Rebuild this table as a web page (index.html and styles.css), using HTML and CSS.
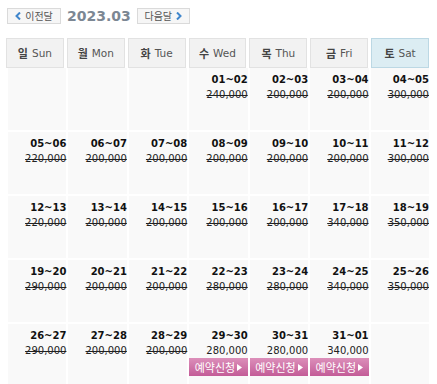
FILE: index.html
```html
<!DOCTYPE html>
<html lang="ko">
<head>
<meta charset="utf-8">
<link rel="stylesheet" href="styles.css">
</head>
<body>
<div class="nav">
  <a class="btn prev"><svg class="chev" width="6" height="8" viewBox="0 0 6 8"><path d="M5 0.5 L1.5 4 L5 7.5" fill="none" stroke="#3f86cc" stroke-width="2"/></svg>이전달</a>
  <span class="year">2023.03</span>
  <a class="btn next">다음달<svg class="chev" width="6" height="8" viewBox="0 0 6 8"><path d="M1 0.5 L4.5 4 L1 7.5" fill="none" stroke="#3f86cc" stroke-width="2"/></svg></a>
</div>
<div class="head">
  <div class="hc"><span class="ko">일</span> Sun</div>
  <div class="hc"><span class="ko">월</span> Mon</div>
  <div class="hc"><span class="ko">화</span> Tue</div>
  <div class="hc"><span class="ko">수</span> Wed</div>
  <div class="hc"><span class="ko">목</span> Thu</div>
  <div class="hc"><span class="ko">금</span> Fri</div>
  <div class="hc sat"><span class="ko">토</span> Sat</div>
</div>
<div class="grid">
  <div class="cell"></div>
  <div class="cell"></div>
  <div class="cell"></div>
  <div class="cell"><div class="d">01~02</div><div class="p s">240,000</div></div>
  <div class="cell"><div class="d">02~03</div><div class="p s">200,000</div></div>
  <div class="cell"><div class="d">03~04</div><div class="p s">200,000</div></div>
  <div class="cell"><div class="d">04~05</div><div class="p s">300,000</div></div>

  <div class="cell"><div class="d">05~06</div><div class="p s">220,000</div></div>
  <div class="cell"><div class="d">06~07</div><div class="p s">200,000</div></div>
  <div class="cell"><div class="d">07~08</div><div class="p s">200,000</div></div>
  <div class="cell"><div class="d">08~09</div><div class="p s">200,000</div></div>
  <div class="cell"><div class="d">09~10</div><div class="p s">200,000</div></div>
  <div class="cell"><div class="d">10~11</div><div class="p s">200,000</div></div>
  <div class="cell"><div class="d">11~12</div><div class="p s">300,000</div></div>

  <div class="cell"><div class="d">12~13</div><div class="p s">220,000</div></div>
  <div class="cell"><div class="d">13~14</div><div class="p s">200,000</div></div>
  <div class="cell"><div class="d">14~15</div><div class="p s">200,000</div></div>
  <div class="cell"><div class="d">15~16</div><div class="p s">200,000</div></div>
  <div class="cell"><div class="d">16~17</div><div class="p s">200,000</div></div>
  <div class="cell"><div class="d">17~18</div><div class="p s">340,000</div></div>
  <div class="cell"><div class="d">18~19</div><div class="p s">350,000</div></div>

  <div class="cell"><div class="d">19~20</div><div class="p s">290,000</div></div>
  <div class="cell"><div class="d">20~21</div><div class="p s">200,000</div></div>
  <div class="cell"><div class="d">21~22</div><div class="p s">200,000</div></div>
  <div class="cell"><div class="d">22~23</div><div class="p s">280,000</div></div>
  <div class="cell"><div class="d">23~24</div><div class="p s">280,000</div></div>
  <div class="cell"><div class="d">24~25</div><div class="p s">340,000</div></div>
  <div class="cell"><div class="d">25~26</div><div class="p s">350,000</div></div>

  <div class="cell"><div class="d">26~27</div><div class="p s">290,000</div></div>
  <div class="cell"><div class="d">27~28</div><div class="p s">200,000</div></div>
  <div class="cell"><div class="d">28~29</div><div class="p s">200,000</div></div>
  <div class="cell"><div class="d">29~30</div><div class="p">280,000</div><a class="rsv">예약신청<svg width="5" height="7" viewBox="0 0 5 7"><path d="M0 0 L5 3.5 L0 7 Z" fill="#fff"/></svg></a></div>
  <div class="cell"><div class="d">30~31</div><div class="p">280,000</div><a class="rsv">예약신청<svg width="5" height="7" viewBox="0 0 5 7"><path d="M0 0 L5 3.5 L0 7 Z" fill="#fff"/></svg></a></div>
  <div class="cell"><div class="d">31~01</div><div class="p">340,000</div><a class="rsv">예약신청<svg width="5" height="7" viewBox="0 0 5 7"><path d="M0 0 L5 3.5 L0 7 Z" fill="#fff"/></svg></a></div>
  <div class="cell"></div>
</div>
</body>
</html>
```
FILE: styles.css
```css
html, body {
  margin: 0;
  padding: 0;
  overflow: hidden;
  background: #fff;
}
body {
  font-family: "DejaVu Sans", "Noto Sans CJK KR", sans-serif;
  color: #222;
}
.nav {
  display: flex;
  align-items: center;
  height: 16px;
  padding: 8px 0 0 7px;
}
.btn {
  box-sizing: border-box;
  height: 16px;
  border: 1px solid #dadada;
  background: #f6f6f6;
  display: flex;
  align-items: center;
  justify-content: center;
  gap: 4px;
  font-family: "Noto Sans CJK KR", sans-serif;
  font-size: 10px;
  color: #555;
  line-height: 14px;
}
.prev { width: 54px; }
.next { width: 53px; }
.year {
  font-family: "DejaVu Sans", sans-serif;
  font-weight: bold;
  font-size: 14px;
  color: #7c8793;
  margin: 0 6px 0 6px;
  line-height: 16px;
}
.head {
  display: grid;
  grid-template-columns: repeat(7, 1fr);
  column-gap: 3px;
  width: 423px;
  margin: 14px 0 0 6px;
}
.hc {
  box-sizing: border-box;
  height: 30px;
  border: 1px solid #e2e2e2;
  background: #f2f2f2;
  display: flex;
  align-items: center;
  justify-content: center;
  gap: 4px;
  font-size: 10.5px;
  color: #555;
}
.hc .ko {
  font-family: "Noto Sans CJK KR", sans-serif;
  font-weight: bold;
  font-size: 11px;
  color: #444;
}
.hc.sat {
  background: #dcedf3;
  border-color: #bcd8e4;
}
.grid {
  display: grid;
  grid-template-columns: repeat(7, 1fr);
  grid-auto-rows: 62px;
  gap: 2px;
  width: 421px;
  margin: 0 0 0 8px;
}
.cell {
  background: #f9f9f9;
  text-align: right;
  padding-top: 6px;
  box-sizing: border-box;
  display: flex;
  flex-direction: column;
  align-items: stretch;
}
.d {
  font-weight: bold;
  font-size: 10px;
  line-height: 12px;
  color: #111;
}
.p {
  font-size: 10px;
  line-height: 12px;
  margin-top: 3px;
  color: #222;
}
.p.s {
  text-decoration: line-through;
}
.rsv {
  margin-top: 1px;
  height: 18px;
  display: flex;
  align-items: center;
  justify-content: center;
  gap: 2px;
  background: linear-gradient(#dc8fba, #c35c97);
  color: #fff;
  font-family: "Noto Sans CJK KR", sans-serif;
  font-size: 11px;
  line-height: 18px;
}
```
